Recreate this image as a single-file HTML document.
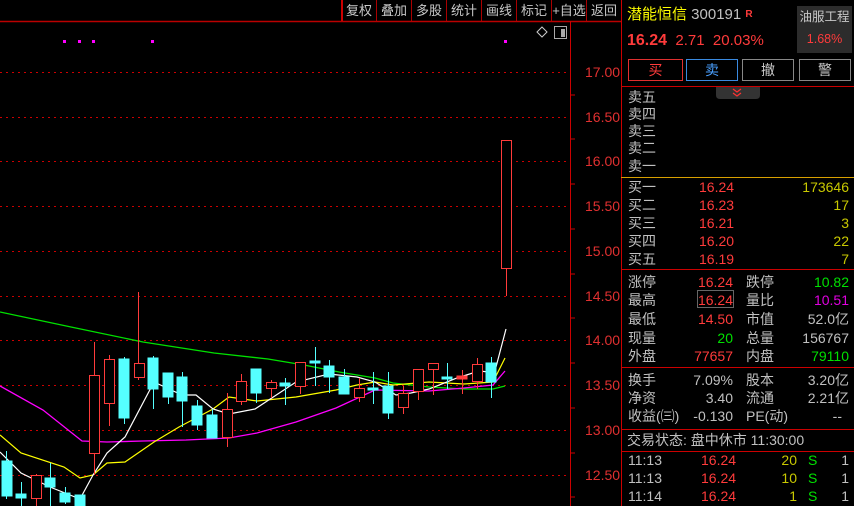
<!DOCTYPE html>
<html><head><meta charset="utf-8"><style>
*{margin:0;padding:0;box-sizing:border-box}
body{width:854px;height:506px;background:#000;overflow:hidden;position:relative;font-family:"Liberation Sans","Noto Sans CJK SC",sans-serif;font-size:14px;color:#c0c0c0}
.a{position:absolute;white-space:nowrap;line-height:18px}
.r{color:#ff3b3b}.y{color:#c8c800}.g{color:#00e000}.w{color:#c0c0c0}.m{color:#e000e0}
.tb{position:absolute;top:0;height:21px;line-height:21px;font-size:13px;color:#c8c8c8;text-align:center;border-left:1px solid #a00}
.btn{position:absolute;top:59px;height:22px;line-height:20px;text-align:center;font-size:14px}
</style></head><body>
<svg width="854" height="506" style="position:absolute;left:0;top:0">
<line x1="0" y1="21.5" x2="621" y2="21.5" stroke="#b00" stroke-width="1.5"/>
<line x1="570.5" y1="21" x2="570.5" y2="506" stroke="#c00"/>
<line x1="621.5" y1="0" x2="621.5" y2="506" stroke="#c00"/>
<g stroke="#c00" stroke-dasharray="2,4">
<line x1="0" y1="72.5" x2="570" y2="72.5"/><line x1="0" y1="117.5" x2="570" y2="117.5"/><line x1="0" y1="161.5" x2="570" y2="161.5"/><line x1="0" y1="206.5" x2="570" y2="206.5"/><line x1="0" y1="251.5" x2="570" y2="251.5"/><line x1="0" y1="296.5" x2="570" y2="296.5"/><line x1="0" y1="340.5" x2="570" y2="340.5"/><line x1="0" y1="385.5" x2="570" y2="385.5"/><line x1="0" y1="430.5" x2="570" y2="430.5"/><line x1="0" y1="475.5" x2="570" y2="475.5"/>
</g>
<g stroke="#c00"><line x1="570" y1="95" x2="575" y2="95"/><line x1="570" y1="139" x2="575" y2="139"/><line x1="570" y1="184" x2="575" y2="184"/><line x1="570" y1="229" x2="575" y2="229"/><line x1="570" y1="274" x2="575" y2="274"/><line x1="570" y1="318" x2="575" y2="318"/><line x1="570" y1="363" x2="575" y2="363"/><line x1="570" y1="408" x2="575" y2="408"/><line x1="570" y1="453" x2="575" y2="453"/><line x1="570" y1="497" x2="575" y2="497"/></g>
<g fill="#e03030" font-size="14" font-family="Liberation Sans">
<text x="585" y="77">17.00</text><text x="585" y="122">16.50</text><text x="585" y="166">16.00</text><text x="585" y="211">15.50</text><text x="585" y="256">15.00</text><text x="585" y="301">14.50</text><text x="585" y="345">14.00</text><text x="585" y="390">13.50</text><text x="585" y="435">13.00</text><text x="585" y="480">12.50</text>
</g>
<g fill="#ff00ff"><rect x="63" y="40" width="3" height="3"/><rect x="78" y="40" width="3" height="3"/><rect x="92" y="40" width="3" height="3"/><rect x="151" y="40" width="3" height="3"/><rect x="504" y="40" width="3" height="3"/></g>
<path d="M542 27 L547 32 L542 37 L537 32Z" fill="none" stroke="#ccc"/>
<rect x="554.5" y="26.5" width="12" height="12" fill="none" stroke="#aaa"/><rect x="561" y="29" width="4" height="8" fill="#aaa"/>
<polyline fill="none" stroke="#00e000" stroke-width="1.3" points="0,312 71,327 143,342 214,353 268,359 304,365 339,372 375,378 393,383 429,387 464,389 493,389 505,386"/>
<polyline fill="none" stroke="#ff00ff" stroke-width="1.3" points="0,386 43,410 82,441 107,442 143,441 186,440 229,438 257,433 296,422 336,408 375,390 429,391 464,388 493,385 505,371"/>
<polyline fill="none" stroke="#ffff00" stroke-width="1.2" points="0,435 21,453 64,467 80,478 93,475 107,463 125,462 154,442 179,427 213,409 229,397 257,401 296,397 336,390 357,385 375,382 393,385 429,382 464,384 493,382 505,358"/>
<polyline fill="none" stroke="#fff" stroke-width="1.2" points="0,452 21,473 50,487 80,499 93,475 107,453 125,437 154,382 182,395 196,395 213,409 229,414 255,409 296,382 329,374 357,377 375,382 396,395 411,393 429,389 457,378 479,371 489,372 496,367 506,329"/>
<g stroke-width="1">
<g stroke="#55ffff" fill="#55ffff">
<line x1="6.5" y1="451" x2="6.5" y2="499"/><rect x="2" y="461" width="10" height="35"/>
<line x1="21.5" y1="482" x2="21.5" y2="506"/><rect x="16" y="494" width="10" height="4"/>
<line x1="50.5" y1="463" x2="50.5" y2="506"/><rect x="45" y="478" width="10" height="9"/>
<line x1="65.5" y1="487" x2="65.5" y2="504"/><rect x="60" y="493" width="10" height="9"/>
<line x1="79.5" y1="496" x2="79.5" y2="506"/><rect x="75" y="495" width="10" height="11"/>
<line x1="124.5" y1="357" x2="124.5" y2="424"/><rect x="119" y="359" width="10" height="59"/>
<line x1="153.5" y1="356" x2="153.5" y2="409"/><rect x="148" y="358" width="10" height="31"/>
<line x1="168.5" y1="373" x2="168.5" y2="404"/><rect x="163" y="373" width="10" height="24"/>
<line x1="182.5" y1="372" x2="182.5" y2="427"/><rect x="177" y="377" width="10" height="24"/>
<line x1="197.5" y1="400" x2="197.5" y2="430"/><rect x="192" y="406" width="10" height="19"/>
<line x1="212.5" y1="409" x2="212.5" y2="438"/><rect x="207" y="415" width="10" height="23"/>
<line x1="256.5" y1="369" x2="256.5" y2="403"/><rect x="251" y="369" width="10" height="24"/>
<line x1="285.5" y1="378" x2="285.5" y2="405"/><rect x="280" y="383" width="10" height="3"/>
<line x1="315.5" y1="347" x2="315.5" y2="386"/><rect x="310" y="361" width="10" height="2"/>
<line x1="329.5" y1="360" x2="329.5" y2="393"/><rect x="324" y="366" width="10" height="11"/>
<line x1="344.5" y1="369" x2="344.5" y2="394"/><rect x="339" y="377" width="10" height="17"/>
<line x1="373.5" y1="372" x2="373.5" y2="404"/><rect x="368" y="388" width="10" height="2"/>
<line x1="388.5" y1="372" x2="388.5" y2="419"/><rect x="383" y="386" width="10" height="27"/>
<line x1="447.5" y1="363" x2="447.5" y2="389"/><rect x="442" y="377" width="10" height="2"/>
<line x1="491.5" y1="357" x2="491.5" y2="398"/><rect x="486" y="363" width="10" height="19"/>
</g>
<g stroke="#ff3b3b" fill="none">
<line x1="36.5" y1="474" x2="36.5" y2="506"/><rect x="31.5" y="475.5" width="10" height="23" fill="#000"/>
<line x1="94.5" y1="342" x2="94.5" y2="475"/><rect x="89.5" y="375.5" width="10" height="78" fill="#000"/>
<line x1="109.5" y1="355" x2="109.5" y2="426"/><rect x="104.5" y="359.5" width="10" height="44" fill="#000"/>
<line x1="138.5" y1="292" x2="138.5" y2="380"/><rect x="134.5" y="363.5" width="10" height="14" fill="#000"/>
<line x1="227.5" y1="393" x2="227.5" y2="447"/><rect x="222.5" y="409.5" width="10" height="28" fill="#000"/>
<line x1="241.5" y1="374" x2="241.5" y2="405"/><rect x="236.5" y="381.5" width="10" height="20" fill="#000"/>
<line x1="271.5" y1="380" x2="271.5" y2="398"/><rect x="266.5" y="382.5" width="10" height="6" fill="#000"/>
<line x1="300.5" y1="362" x2="300.5" y2="394"/><rect x="295.5" y="362.5" width="10" height="24" fill="#000"/>
<line x1="359.5" y1="378" x2="359.5" y2="402"/><rect x="354.5" y="388.5" width="10" height="9" fill="#000"/>
<line x1="403.5" y1="386" x2="403.5" y2="414"/><rect x="398.5" y="393.5" width="10" height="14" fill="#000"/>
<line x1="418.5" y1="369" x2="418.5" y2="400"/><rect x="413.5" y="369.5" width="10" height="22" fill="#000"/>
<line x1="433.5" y1="363" x2="433.5" y2="395"/><rect x="428.5" y="363.5" width="10" height="6" fill="#000"/>
<line x1="462.5" y1="370" x2="462.5" y2="394"/><rect x="457" y="376" width="10" height="3" fill="#ff3b3b"/>
<line x1="477.5" y1="358" x2="477.5" y2="389"/><rect x="472.5" y="364.5" width="10" height="17" fill="#000"/>
<line x1="506.5" y1="269" x2="506.5" y2="296"/><rect x="501.5" y="140.5" width="10" height="128" fill="#000"/>
</g></g>
<line x1="621" y1="86.5" x2="854" y2="86.5" stroke="#c00"/>
<line x1="621" y1="177.5" x2="854" y2="177.5" stroke="#d8a000"/>
<line x1="621" y1="269.5" x2="854" y2="269.5" stroke="#c00"/>
<line x1="621" y1="367.5" x2="854" y2="367.5" stroke="#c00"/>
<line x1="621" y1="429.5" x2="854" y2="429.5" stroke="#c00"/>
<line x1="621" y1="451.5" x2="854" y2="451.5" stroke="#c00"/>
<path d="M716 87 H760 V95 Q760 99 756 99 H720 Q716 99 716 95Z" fill="#333"/>
<path d="M733 89 l4 3 l4 -3 M733 93 l4 3 l4 -3" fill="none" stroke="#f33" stroke-width="1.2"/>
<rect x="697.5" y="290.5" width="36" height="17" fill="none" stroke="#666"/>
</svg>
<div class="tb" style="left:341px;width:34px;border-left:2px solid #c00">复权</div>
<div class="tb" style="left:376px;width:35px">叠加</div>
<div class="tb" style="left:411px;width:35px">多股</div>
<div class="tb" style="left:446px;width:35px">统计</div>
<div class="tb" style="left:481px;width:35px">画线</div>
<div class="tb" style="left:516px;width:35px">标记</div>
<div class="tb" style="left:551px;width:35px">+自选</div>
<div class="tb" style="left:586px;width:35px">返回</div>

<div class="a" style="left:627px;top:6px;font-size:15px;color:#ffff00">潜能恒信 <span style="color:#c0c0c0">300191</span> <span style="color:#ff3b3b;font-size:10px;font-weight:bold;vertical-align:top">R</span></div>
<div class="a" style="left:627px;top:32px;font-size:15px" ><b class="r" style="font-size:16px">16.24</b> <span class="r">&nbsp;2.71&nbsp; 20.03%</span></div>
<div style="position:absolute;left:797px;top:6px;width:55px;height:47px;background:#2c2c2c;text-align:center;font-size:12.5px;line-height:22px;color:#c8c8c8;white-space:nowrap;overflow:hidden">油服工程<br><span class="r">1.68%</span></div>
<div class="btn r" style="left:628px;width:55px;border:1px solid #e03030">买</div>
<div class="btn" style="left:686px;width:52px;border:1px solid #3a8ae0;color:#4aa0ff">卖</div>
<div class="btn" style="left:742px;width:52px;border:1px solid #888;color:#ccc">撤</div>
<div class="btn" style="left:799px;width:52px;border:1px solid #888;color:#ccc">警</div>

<div class="a" style="left:628px;top:88px">卖五</div>
<div class="a" style="left:628px;top:105px">卖四</div>
<div class="a" style="left:628px;top:122px">卖三</div>
<div class="a" style="left:628px;top:139px">卖二</div>
<div class="a" style="left:628px;top:157px">卖一</div>

<div class="a" style="left:628px;top:178px">买一</div><div class="a r" style="left:699px;top:178px">16.24</div><div class="a y" style="right:5px;top:178px">173646</div>
<div class="a" style="left:628px;top:196px">买二</div><div class="a r" style="left:699px;top:196px">16.23</div><div class="a y" style="right:5px;top:196px">17</div>
<div class="a" style="left:628px;top:214px">买三</div><div class="a r" style="left:699px;top:214px">16.21</div><div class="a y" style="right:5px;top:214px">3</div>
<div class="a" style="left:628px;top:232px">买四</div><div class="a r" style="left:699px;top:232px">16.20</div><div class="a y" style="right:5px;top:232px">22</div>
<div class="a" style="left:628px;top:250px">买五</div><div class="a r" style="left:699px;top:250px">16.19</div><div class="a y" style="right:5px;top:250px">7</div>

<div class="a" style="left:628px;top:273px">涨停</div><div class="a r" style="right:121px;top:273px">16.24</div><div class="a" style="left:746px;top:273px">跌停</div><div class="a g" style="right:5px;top:273px">10.82</div>
<div class="a" style="left:628px;top:291px">最高</div><div class="a r" style="right:121px;top:291px">16.24</div><div class="a" style="left:746px;top:291px">量比</div><div class="a m" style="right:5px;top:291px">10.51</div>
<div class="a" style="left:628px;top:310px">最低</div><div class="a r" style="right:121px;top:310px">14.50</div><div class="a" style="left:746px;top:310px">市值</div><div class="a" style="right:5px;top:310px">52.0亿</div>
<div class="a" style="left:628px;top:329px">现量</div><div class="a g" style="right:121px;top:329px">20</div><div class="a" style="left:746px;top:329px">总量</div><div class="a" style="right:5px;top:329px">156767</div>
<div class="a" style="left:628px;top:347px">外盘</div><div class="a r" style="right:121px;top:347px">77657</div><div class="a" style="left:746px;top:347px">内盘</div><div class="a g" style="right:5px;top:347px">79110</div>

<div class="a" style="left:628px;top:371px">换手</div><div class="a" style="right:121px;top:371px">7.09%</div><div class="a" style="left:746px;top:371px">股本</div><div class="a" style="right:5px;top:371px">3.20亿</div>
<div class="a" style="left:628px;top:389px">净资</div><div class="a" style="right:121px;top:389px">3.40</div><div class="a" style="left:746px;top:389px">流通</div><div class="a" style="right:5px;top:389px">2.21亿</div>
<div class="a" style="left:628px;top:407px">收益(㈢)</div><div class="a" style="right:121px;top:407px">-0.130</div><div class="a" style="left:746px;top:407px">PE(动)</div><div class="a" style="right:12px;top:407px">--</div>

<div class="a" style="left:627px;top:431px">交易状态: 盘中休市 11:30:00</div>

<div class="a" style="left:628px;top:451px">11:13</div><div class="a r" style="left:701px;top:451px">16.24</div><div class="a y" style="right:57px;top:451px">20</div><div class="a g" style="left:808px;top:451px">S</div><div class="a" style="right:5px;top:451px">1</div>
<div class="a" style="left:628px;top:469px">11:13</div><div class="a r" style="left:701px;top:469px">16.24</div><div class="a y" style="right:57px;top:469px">10</div><div class="a g" style="left:808px;top:469px">S</div><div class="a" style="right:5px;top:469px">1</div>
<div class="a" style="left:628px;top:487px">11:14</div><div class="a r" style="left:701px;top:487px">16.24</div><div class="a y" style="right:57px;top:487px">1</div><div class="a g" style="left:808px;top:487px">S</div><div class="a" style="right:5px;top:487px">1</div>
</body></html>
